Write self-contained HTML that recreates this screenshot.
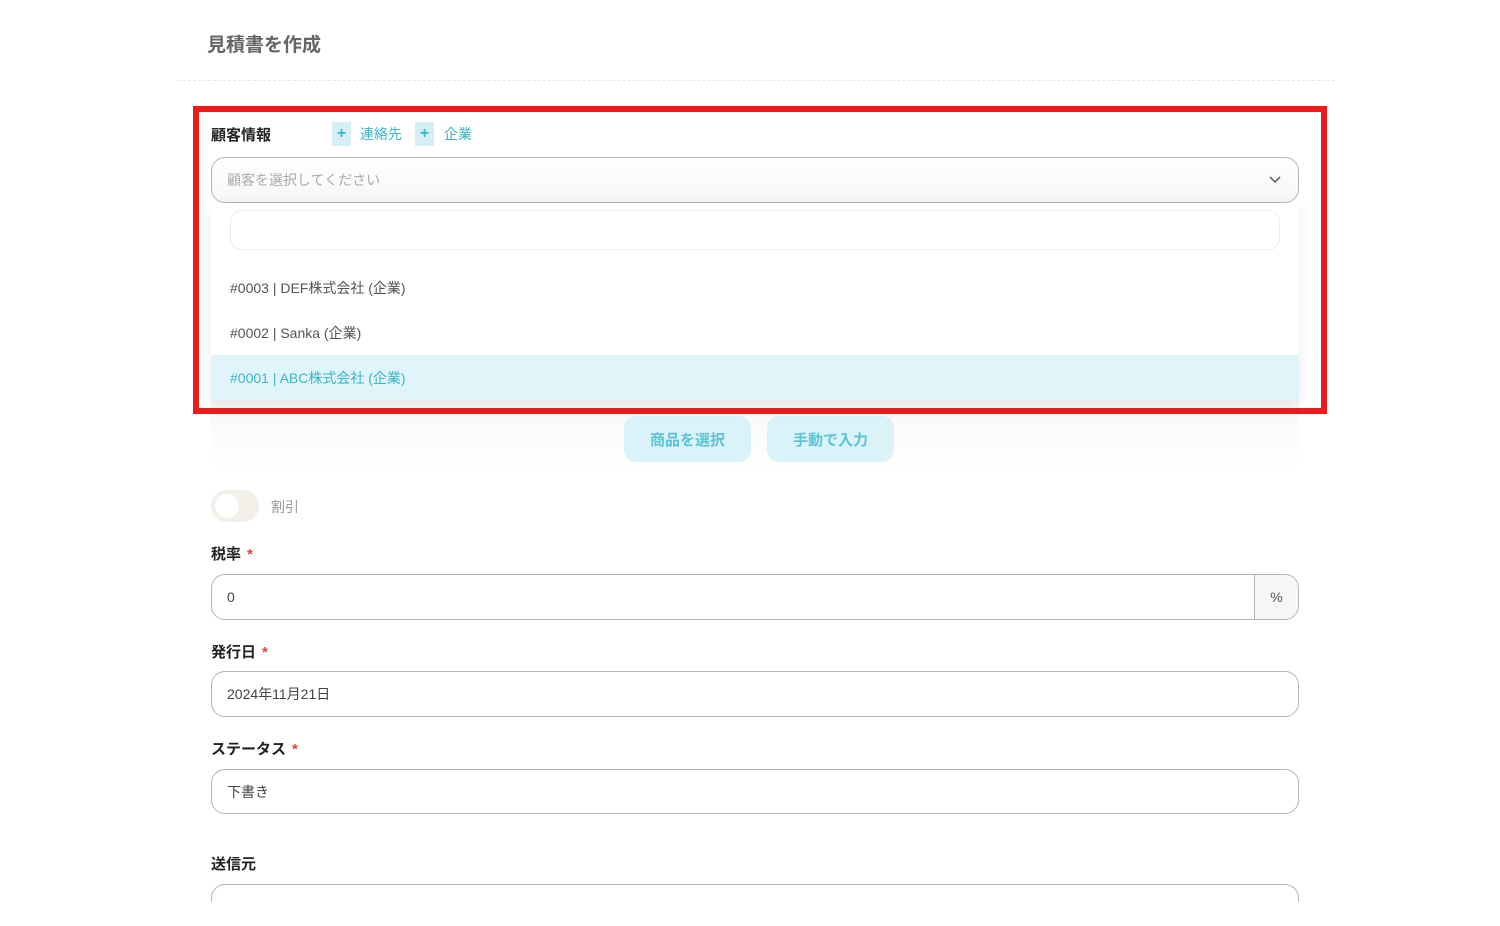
<!DOCTYPE html>
<html><head><meta charset="utf-8"><style>
*{box-sizing:border-box;margin:0;padding:0}
body{width:1500px;height:926px;background:#fff;font-family:"Liberation Sans","Noto Sans CJK JP",sans-serif;position:relative;overflow:hidden;color:#333}
.a{position:absolute}
.lbl{font-size:15px;color:#222;font-weight:bold}
.req{color:#e0463b;margin-left:6px}
.inp{position:absolute;left:211px;width:1088px;border:1.5px solid #b5b5b5;border-radius:14px;background:#fff;font-size:14px;color:#444;padding-left:15px;display:flex;align-items:center}
.item{position:absolute;left:211px;width:1088px;height:45px;font-size:14px;color:#555;padding-left:19px;display:flex;align-items:center}
.btn{position:absolute;top:416px;height:46px;width:127px;background:#d9f3f8;border-radius:12px;color:#5fc3d6;font-size:15px;font-weight:bold;display:flex;align-items:center;justify-content:center}
.plus{position:absolute;top:122px;width:19px;height:24px;background:#d6eff4;color:#3bb5c9;font-size:16px;font-weight:bold;display:flex;align-items:center;justify-content:center}
</style></head><body>
<div class="a" style="left:207px;top:30px;font-size:19px;color:#666;font-weight:bold">見積書を作成</div>
<div class="a" style="left:178px;top:80px;width:1157px;border-top:1.5px dashed #e6e6e6"></div>

<div class="a" style="left:211px;top:400px;width:1088px;height:70px;background:linear-gradient(#f3f3f3,#fff);opacity:.6"></div>
<div class="btn" style="left:624px">商品を選択</div>
<div class="btn" style="left:767px">手動で入力</div>

<div class="a" style="left:193px;top:106px;width:1134px;height:308px;border:6px solid #ec1c1c"></div>
<div class="a lbl" style="left:211px;top:124px">顧客情報</div>
<div class="plus" style="left:332px">+</div>
<div class="a" style="left:360px;top:124px;font-size:14px;color:#3bb5c9">連絡先</div>
<div class="plus" style="left:415px">+</div>
<div class="a" style="left:444px;top:124px;font-size:14px;color:#3bb5c9">企業</div>
<div class="inp" style="top:157px;height:46px;color:#aaa;background:linear-gradient(#fff,#f6f6f6)">顧客を選択してください
<svg style="position:absolute;right:16px;top:17px" width="14" height="9" viewBox="0 0 14 9"><path d="M2 2l5 5 5-5" fill="none" stroke="#666" stroke-width="1.6"/></svg></div>
<div class="a" style="left:211px;top:203px;width:1088px;height:197px;background:#fff;box-shadow:0 6px 14px rgba(0,0,0,.08)"></div>
<div class="a" style="left:230px;top:210px;width:1050px;height:40px;border:1.5px solid #f1ece6;border-radius:12px"></div>
<div class="item" style="top:265px">#0003 | DEF株式会社 (企業)</div>
<div class="item" style="top:310px">#0002 | Sanka (企業)</div>
<div class="item" style="top:355px;background:#dff5fa;color:#3bb5c9">#0001 | ABC株式会社 (企業)</div>

<div class="a" style="left:211px;top:490px;width:48px;height:32px;border-radius:16px;background:#f3efe9"></div>
<div class="a" style="left:215px;top:494px;width:24px;height:24px;border-radius:12px;background:#fff"></div>
<div class="a" style="left:271px;top:497px;font-size:14px;color:#999">割引</div>

<div class="a lbl" style="left:211px;top:543px">税率<span class="req">*</span></div>
<div class="inp" style="top:574px;height:46px">0
<div class="a" style="right:0;top:0;bottom:0;width:44px;border-left:1.5px solid #b5b5b5;background:#f6f6f6;border-radius:0 13px 13px 0;display:flex;align-items:center;justify-content:center;color:#555">%</div></div>

<div class="a lbl" style="left:211px;top:641px">発行日<span class="req">*</span></div>
<div class="inp" style="top:671px;height:46px">2024年11月21日</div>

<div class="a lbl" style="left:211px;top:738px">ステータス<span class="req">*</span></div>
<div class="inp" style="top:769px;height:45px">下書き</div>

<div class="a lbl" style="left:211px;top:853px">送信元</div>
<div class="inp" style="top:884px;height:18px;border-bottom:none;border-radius:14px 14px 0 0"></div>
</body></html>
